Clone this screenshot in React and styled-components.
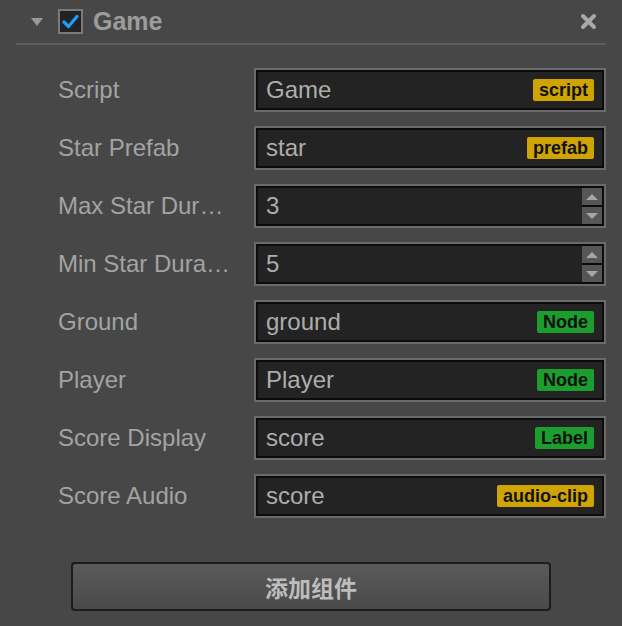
import React from "react";
import styled, { createGlobalStyle } from "styled-components";

const GlobalStyle = createGlobalStyle`
  html, body {
    margin: 0;
    background: #474747;
  }
  body {
    font-family: "Liberation Sans", Arial, "Noto Sans CJK SC", sans-serif;
  }
`;

const Panel = styled.div`
  width: 622px;
  height: 626px;
  background: #474747;
  overflow: hidden;
`;

const Header = styled.div`
  display: flex;
  align-items: center;
  height: 43px;
  margin: 0 16px;
  padding: 0 9px 0 15px;
  border-bottom: 2px solid #5e5e5e;
`;

const Fold = styled.div`
  width: 0;
  height: 0;
  border-left: 6.5px solid transparent;
  border-right: 6.5px solid transparent;
  border-top: 8px solid #9a9a9a;
  margin-right: 15px;
`;

const Check = styled.div`
  width: 25px;
  height: 25px;
  box-sizing: border-box;
  border: 2px solid #7a7a7a;
  background: #222222;
  display: flex;
  align-items: center;
  justify-content: center;
  margin-right: 10px;
`;

const Title = styled.div`
  flex: 1;
  font-size: 25px;
  font-weight: bold;
  color: #9c9c9c;
`;

const Rows = styled.div`
  display: grid;
  grid-template-columns: 175px 1fr;
  column-gap: 21px;
  row-gap: 14px;
  padding: 23px 16px 0 58px;
`;

// long names are cut with an ellipsis, as in the editor
const Label = styled.div`
  align-self: center;
  font-size: 24px;
  color: #a3a3a3;
  white-space: nowrap;
  overflow: hidden;
  text-overflow: ellipsis;
`;

const Field = styled.div`
  display: flex;
  align-items: center;
  height: 44px;
  box-sizing: border-box;
  border: 2px solid #6a6a6a;
  box-shadow: inset 0 0 0 2px #0c0c0c;
  background: #232323;
  padding: ${(p) => (p.$spin ? "2px 2px 2px 10px" : "0 10px")};
`;

const Value = styled.div`
  flex: 1;
  font-size: 24px;
  color: #adadad;
`;

const Badge = styled.div`
  height: 22px;
  line-height: 22px;
  padding: 0 6px;
  border-radius: 2px;
  font-size: 18px;
  font-weight: bold;
  color: #111111;
  background: ${(p) => (p.$kind === "node" ? "#1c9e2e" : "#d0a400")};
`;

const Spinner = styled.div`
  align-self: stretch;
  width: 20px;
  display: flex;
  flex-direction: column;
  gap: 2px;
  background: #0c0c0c;
`;

const SpinButton = styled.div`
  flex: 1;
  background: #565656;
  display: flex;
  align-items: center;
  justify-content: center;
`;

const Arrow = styled.div`
  width: 0;
  height: 0;
  border-left: 6px solid transparent;
  border-right: 6px solid transparent;
  ${(p) =>
    p.$up
      ? "border-bottom: 6px solid #a6a6a6;"
      : "border-top: 6px solid #a6a6a6;"}
`;

const AddButton = styled.div`
  width: 480px;
  height: 49px;
  box-sizing: border-box;
  margin: 44px auto 0;
  border: 2px solid #1c1c1c;
  border-radius: 4px;
  background: linear-gradient(#5a5a5a, #4a4a4a);
  display: flex;
  align-items: center;
  justify-content: center;
  font-size: 23px;
  font-weight: bold;
  color: #bdbdbd;
`;

const props = [
  { label: "Script", value: "Game", badge: "script" },
  { label: "Star Prefab", value: "star", badge: "prefab" },
  { label: "Max Star Duration", value: "3", spin: true },
  { label: "Min Star Duration", value: "5", spin: true },
  { label: "Ground", value: "ground", badge: "Node", kind: "node" },
  { label: "Player", value: "Player", badge: "Node", kind: "node" },
  { label: "Score Display", value: "score", badge: "Label", kind: "node" },
  { label: "Score Audio", value: "score", badge: "audio-clip" },
];

export default function App() {
  return (
    <Panel>
      <GlobalStyle />
      <Header>
        <Fold />
        <Check>
          <svg width="17" height="15" viewBox="0 0 17 15">
            <path
              d="M2 8 L6.5 12.5 L15 2.5"
              fill="none"
              stroke="#1a9dff"
              strokeWidth="3.2"
              strokeLinecap="round"
              strokeLinejoin="round"
            />
          </svg>
        </Check>
        <Title>Game</Title>
        <svg width="17" height="17" viewBox="0 0 17 17">
          <path
            d="M3 3 L14 14 M14 3 L3 14"
            stroke="#a9a9a9"
            strokeWidth="4"
            strokeLinecap="round"
          />
        </svg>
      </Header>
      <Rows>
        {props.map((p) => (
          <React.Fragment key={p.label}>
            <Label title={p.label}>{p.label}</Label>
            <Field $spin={p.spin}>
              <Value>{p.value}</Value>
              {p.badge && <Badge $kind={p.kind}>{p.badge}</Badge>}
              {p.spin && (
                <Spinner>
                  <SpinButton>
                    <Arrow $up />
                  </SpinButton>
                  <SpinButton>
                    <Arrow />
                  </SpinButton>
                </Spinner>
              )}
            </Field>
          </React.Fragment>
        ))}
      </Rows>
      <AddButton>添加组件</AddButton>
    </Panel>
  );
}
